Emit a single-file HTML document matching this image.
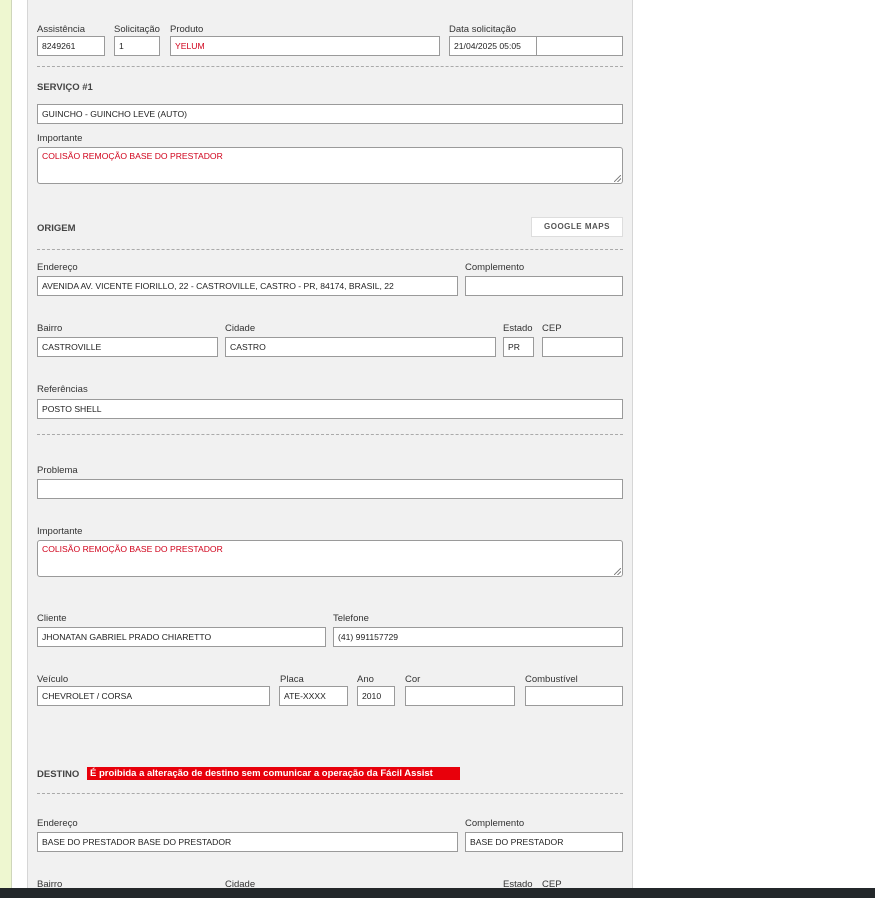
<!DOCTYPE html>
<html><head><meta charset="utf-8">
<style>
*{margin:0;padding:0;box-sizing:border-box}
html,body{width:875px;height:898px;overflow:hidden;background:#fff;font-family:"Liberation Sans",sans-serif;}
.g{position:absolute;left:0;top:0;width:12px;height:888px;background:#eef7d0;border-right:1px solid #cfd6bb}
.w{position:absolute;left:13px;top:0;width:14px;height:888px;background:#fff}
.p{position:absolute;left:27px;top:0;width:606px;height:888px;background:#f1f1f1;border-left:1px solid #d6d6d6;border-right:1px solid #d6d6d6}
.bar{position:absolute;left:0;top:888px;width:875px;height:10px;background:#23272a}
.l{position:absolute;font-size:9.5px;color:#333;line-height:12px;white-space:nowrap;margin-top:2px}
.i{position:absolute;height:20px;background:#fff;border:1px solid #9a9a9a;font-size:8.6px;color:#222;line-height:18px;padding-left:4px;white-space:nowrap;overflow:hidden}
.t{position:absolute;height:37px;background:#fff;border:1px solid #9a9a9a;border-radius:3px;font-size:8.6px;color:#d0021b;padding:3px 4px;white-space:nowrap}
.t:after{content:"";position:absolute;right:1px;bottom:1px;width:7px;height:7px;background:linear-gradient(135deg,transparent 45%,#888 45%,#888 55%,transparent 55%,transparent 70%,#888 70%,#888 80%,transparent 80%)}
.r{color:#d0021b}
.d{position:absolute;left:37px;width:586px;border-top:1px dashed #aaa;height:0}
.h{position:absolute;font-size:9.5px;font-weight:bold;color:#444;white-space:nowrap;margin-top:2px}
</style></head><body>
<div class="g"></div><div class="w"></div><div class="p"></div>

<div class="l" style="left:37px;top:22px">Assistência</div>
<div class="l" style="left:114px;top:22px">Solicitação</div>
<div class="l" style="left:170px;top:22px">Produto</div>
<div class="l" style="left:449px;top:22px">Data solicitação</div>
<div class="i" style="left:37px;top:36px;width:68px">8249261</div>
<div class="i" style="left:114px;top:36px;width:46px">1</div>
<div class="i r" style="left:170px;top:36px;width:270px">YELUM</div>
<div class="i" style="left:449px;top:36px;width:88px">21/04/2025 05:05</div>
<div class="i" style="left:536px;top:36px;width:87px"></div>
<div class="d" style="top:66px"></div>

<div class="h" style="left:37px;top:80px">SERVIÇO #1</div>
<div class="i" style="left:37px;top:104px;width:586px">GUINCHO - GUINCHO LEVE (AUTO)</div>
<div class="l" style="left:37px;top:131px">Importante</div>
<div class="t" style="left:37px;top:147px;width:586px">COLISÃO REMOÇÃO BASE DO PRESTADOR</div>

<div class="h" style="left:37px;top:221px">ORIGEM</div>
<div style="position:absolute;left:531px;top:217px;width:92px;height:20px;background:#fff;border:1px solid #ddd;font-size:8px;font-weight:bold;color:#555;text-align:center;line-height:18px;letter-spacing:.5px">GOOGLE MAPS</div>
<div class="d" style="top:249px"></div>

<div class="l" style="left:37px;top:260px">Endereço</div>
<div class="l" style="left:465px;top:260px">Complemento</div>
<div class="i" style="left:37px;top:276px;width:421px">AVENIDA AV. VICENTE FIORILLO, 22 - CASTROVILLE, CASTRO - PR, 84174, BRASIL, 22</div>
<div class="i" style="left:465px;top:276px;width:158px"></div>

<div class="l" style="left:37px;top:321px">Bairro</div>
<div class="l" style="left:225px;top:321px">Cidade</div>
<div class="l" style="left:503px;top:321px">Estado</div>
<div class="l" style="left:542px;top:321px">CEP</div>
<div class="i" style="left:37px;top:337px;width:181px">CASTROVILLE</div>
<div class="i" style="left:225px;top:337px;width:271px">CASTRO</div>
<div class="i" style="left:503px;top:337px;width:31px">PR</div>
<div class="i" style="left:542px;top:337px;width:81px"></div>

<div class="l" style="left:37px;top:382px">Referências</div>
<div class="i" style="left:37px;top:399px;width:586px">POSTO SHELL</div>
<div class="d" style="top:434px"></div>

<div class="l" style="left:37px;top:463px">Problema</div>
<div class="i" style="left:37px;top:479px;width:586px"></div>
<div class="l" style="left:37px;top:524px">Importante</div>
<div class="t" style="left:37px;top:540px;width:586px">COLISÃO REMOÇÃO BASE DO PRESTADOR</div>

<div class="l" style="left:37px;top:611px">Cliente</div>
<div class="l" style="left:333px;top:611px">Telefone</div>
<div class="i" style="left:37px;top:627px;width:289px">JHONATAN GABRIEL PRADO CHIARETTO</div>
<div class="i" style="left:333px;top:627px;width:290px">(41) 991157729</div>

<div class="l" style="left:37px;top:672px">Veículo</div>
<div class="l" style="left:280px;top:672px">Placa</div>
<div class="l" style="left:357px;top:672px">Ano</div>
<div class="l" style="left:405px;top:672px">Cor</div>
<div class="l" style="left:525px;top:672px">Combustível</div>
<div class="i" style="left:37px;top:686px;width:233px">CHEVROLET / CORSA</div>
<div class="i" style="left:279px;top:686px;width:69px">ATE-XXXX</div>
<div class="i" style="left:357px;top:686px;width:38px">2010</div>
<div class="i" style="left:405px;top:686px;width:110px"></div>
<div class="i" style="left:525px;top:686px;width:98px"></div>

<div class="h" style="left:37px;top:767px">DESTINO</div>
<div style="position:absolute;left:87px;top:767px;width:373px;height:13px;background:#e8000b;color:#fff;font-size:9.5px;font-weight:bold;line-height:13px;padding-left:3px;white-space:nowrap;overflow:hidden">É proibida a alteração de destino sem comunicar a operação da Fácil Assist</div>
<div class="d" style="top:793px"></div>

<div class="l" style="left:37px;top:816px">Endereço</div>
<div class="l" style="left:465px;top:816px">Complemento</div>
<div class="i" style="left:37px;top:832px;width:421px">BASE DO PRESTADOR BASE DO PRESTADOR</div>
<div class="i" style="left:465px;top:832px;width:158px">BASE DO PRESTADOR</div>

<div class="l" style="left:37px;top:877px">Bairro</div>
<div class="l" style="left:225px;top:877px">Cidade</div>
<div class="l" style="left:503px;top:877px">Estado</div>
<div class="l" style="left:542px;top:877px">CEP</div>

<div class="bar"></div>
</body></html>
